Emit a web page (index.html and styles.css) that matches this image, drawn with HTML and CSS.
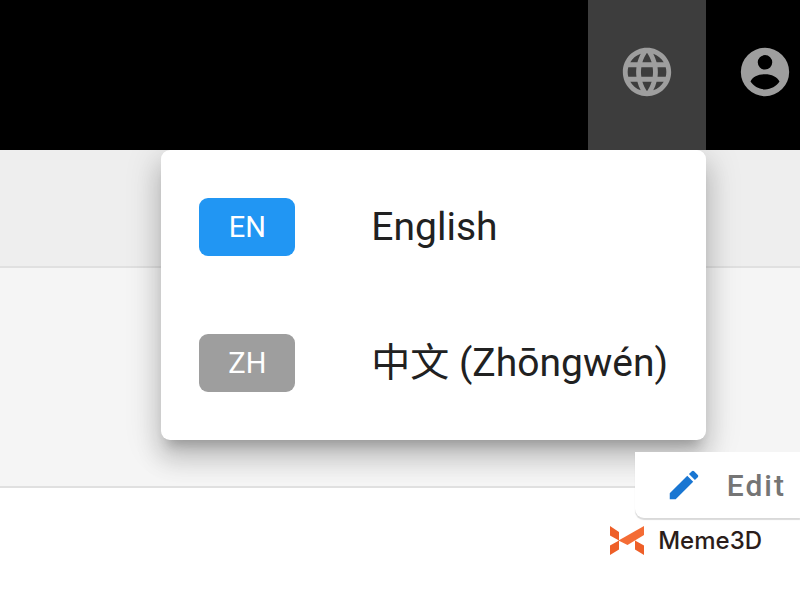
FILE: index.html
```html
<!DOCTYPE html>
<html lang="en">
<head>
    <meta charset="UTF-8">
    <meta name="viewport" content="width=device-width, initial-scale=1.0">
    <title>Language menu</title>
    <link rel="stylesheet" href="styles.css">
</head>
<body>
    <header class="app-bar">
        <div class="language">
            <button class="bar-btn active" aria-label="Language" aria-expanded="true">
                <svg class="bar-icon" viewBox="0 0 24 24">
                    <path d="M11.99 2C6.47 2 2 6.48 2 12s4.47 10 9.99 10C17.52 22 22 17.52 22 12S17.52 2 11.99 2zm6.93 6h-2.95c-.32-1.25-.78-2.45-1.38-3.56 1.84.63 3.37 1.91 4.33 3.56zM12 4.04c.83 1.2 1.48 2.53 1.91 3.96h-3.82c.43-1.43 1.08-2.76 1.91-3.96zM4.26 14C4.1 13.36 4 12.69 4 12s.1-1.36.26-2h3.38c-.08.66-.14 1.32-.14 2s.06 1.34.14 2H4.26zm.82 2h2.95c.32 1.25.78 2.45 1.38 3.56-1.84-.63-3.37-1.9-4.33-3.56zm2.95-8H5.08c.96-1.66 2.49-2.93 4.33-3.56C8.81 5.55 8.35 6.75 8.03 8zM12 19.96c-.83-1.2-1.48-2.53-1.91-3.96h3.82c-.43 1.43-1.08 2.76-1.91 3.96zM14.34 14H9.66c-.09-.66-.16-1.32-.16-2s.07-1.35.16-2h4.68c.09.65.16 1.32.16 2s-.07 1.34-.16 2zm.25 5.56c.6-1.11 1.06-2.31 1.38-3.56h2.95c-.96 1.65-2.49 2.93-4.33 3.56zM16.36 14c.08-.66.14-1.32.14-2s-.06-1.34-.14-2h3.38c.16.64.26 1.31.26 2s-.1 1.36-.26 2h-3.38z"/>
                </svg>
            </button>
            <ul class="menu">
                <li>
                    <button class="menu-item">
                        <span class="badge selected">EN</span>
                        <span>English</span>
                    </button>
                </li>
                <li>
                    <button class="menu-item">
                        <span class="badge">ZH</span>
                        <span>中文 (Zhōngwén)</span>
                    </button>
                </li>
            </ul>
        </div>
        <button class="bar-btn account" aria-label="Account">
            <svg class="bar-icon" viewBox="0 0 24 24">
                <path fill-rule="evenodd" d="M12 2a10 10 0 1 0 0 20 10 10 0 0 0 0-20zm0 3a3 3 0 1 1 0 6 3 3 0 0 1 0-6zm0 14.2c-2.500 0-4.710-1.280-6-3.220 .8-2 3.300-3.080 6-3.080s5.200 1.080 6 3.080c-1.290 1.940-3.500 3.220-6 3.220z"/>
            </svg>
        </button>
    </header>

    <main>
        <div class="tabs-row"></div>
        <div class="toolbar-row"></div>
        <div class="actions">
            <button class="edit-btn">
                <svg class="edit-icon" viewBox="0 0 24 24">
                    <path d="M3 17.250V21h3.750L17.810 9.940l-3.750-3.750L3 17.250zM20.710 7.040a1 1 0 0 0 0-1.410l-2.340-2.340a1 1 0 0 0-1.410 0l-1.830 1.830 3.750 3.750 1.830-1.830z"/>
                </svg>
                Edit
            </button>
        </div>
    </main>

    <footer class="brand">
        <svg class="brand-logo" viewBox="0 0 34 29">
            <path fill="#ee5f28" d="M0 0l9 6v8.500L0 9.500zM0 19.500l9-5v9L0 29zM25 14.500l9 5V29l-9-5.500z"/>
            <path fill="#f46c35" d="M34 0v9L17.500 19 8.500 14.500z"/>
        </svg>
        <span>Meme3D</span>
    </footer>
</body>
</html>
```

FILE: styles.css
```css
body {
    margin: 0;
    background-color: #fff;
    color: #212121;
    font-family: Roboto, "Noto Sans CJK SC", sans-serif;
}
button {
    border: none;
    padding: 0;
    background: none;
    color: inherit;
    font-family: inherit;
    cursor: pointer;
}

/* top bar */
.app-bar {
    display: flex;
    justify-content: flex-end;
    height: 150px;
    background-color: #000;
}
.language {
    position: relative;
    display: flex;
}
.bar-btn {
    display: flex;
    align-items: center;
    justify-content: center;
    width: 118px;
    padding-bottom: 6px;
}
.bar-btn.active {
    background-color: #3d3d3d;
}
.bar-btn.account {
    width: 94px;
    padding-left: 24px;
}
.bar-icon {
    width: 58px;
    height: 58px;
    fill: #9e9e9e;
}

/* language menu */
.menu {
    position: absolute;
    top: 100%;
    right: 0;
    z-index: 1;
    margin: 0;
    padding: 9px 0;
    list-style: none;
    white-space: nowrap;
    background-color: #fff;
    border-radius: 9px;
    box-shadow: 0 12px 12px -7px rgba(0, 0, 0, 0.2),
        0 19px 24px 2px rgba(0, 0, 0, 0.14),
        0 7px 34px 5px rgba(0, 0, 0, 0.12);
    clip-path: inset(0 -60px -80px -60px);
}
.menu-item {
    display: flex;
    align-items: center;
    gap: 76px;
    width: 100%;
    height: 136px;
    padding: 0 38px;
    font-size: 39px;
    line-height: 48px;
}
.badge {
    width: 96px;
    border-radius: 9px;
    background-color: #9e9e9e;
    color: #fff;
    font-size: 29px;
    line-height: 58px;
    text-align: center;
}
.badge.selected {
    background-color: #2196f3;
}

/* page rows */
.tabs-row {
    height: 116px;
    background-color: #eee;
    border-bottom: 2px solid #e0e0e0;
}
.toolbar-row {
    height: 218px;
    background-color: #f5f5f5;
    border-bottom: 2px solid #e0e0e0;
}
.actions {
    position: relative;
    z-index: 2;
    display: flex;
    justify-content: flex-end;
    margin-top: -36px;
}
.edit-btn {
    display: flex;
    align-items: center;
    gap: 24px;
    height: 66px;
    padding: 0 14px 0 30px;
    background-color: #fff;
    border-radius: 0 0 0 9px;
    box-shadow: 0 2px 1px rgba(0, 0, 0, 0.15);
    color: #757575;
    font-size: 30px;
    font-weight: 500;
    letter-spacing: 2px;
}
.edit-icon {
    width: 38px;
    height: 38px;
    fill: #1976d2;
}

.brand {
    display: flex;
    align-items: center;
    justify-content: flex-end;
    gap: 14px;
    padding: 8px 38px;
    color: #2b1d1a;
    font-family: Inter, sans-serif;
    font-size: 24px;
    font-weight: 500;
    line-height: 29px;
}
.brand-logo {
    width: 34px;
    height: 29px;
}
```
